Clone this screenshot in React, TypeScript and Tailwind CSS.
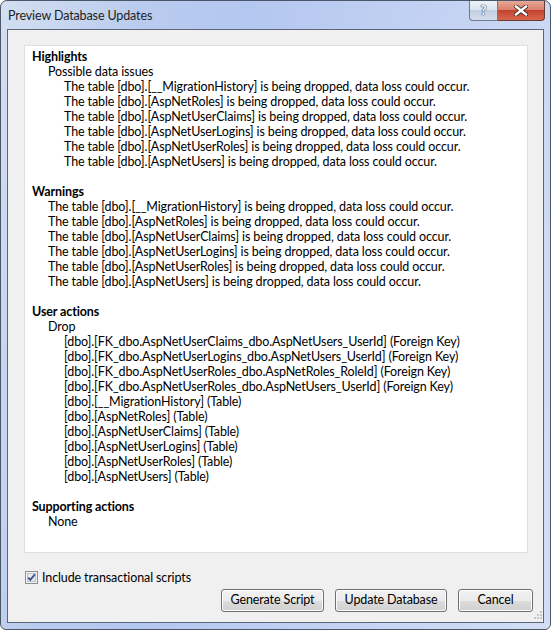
import React from 'react';

type Line = { text: string; level: number; bold?: boolean };

const tables = ['__MigrationHistory', 'AspNetRoles', 'AspNetUserClaims', 'AspNetUserLogins', 'AspNetUserRoles', 'AspNetUsers'];
const dropped = (t: string) => `The table [dbo].[${t}] is being dropped, data loss could occur.`;

const lines: Line[] = [
  { text: 'Highlights', level: 0, bold: true },
  { text: 'Possible data issues', level: 1 },
  ...tables.map((t) => ({ text: dropped(t), level: 2 })),
  { text: '', level: 0 },
  { text: 'Warnings', level: 0, bold: true },
  ...tables.map((t) => ({ text: dropped(t), level: 1 })),
  { text: '', level: 0 },
  { text: 'User actions', level: 0, bold: true },
  { text: 'Drop', level: 1 },
  { text: '[dbo].[FK_dbo.AspNetUserClaims_dbo.AspNetUsers_UserId] (Foreign Key)', level: 2 },
  { text: '[dbo].[FK_dbo.AspNetUserLogins_dbo.AspNetUsers_UserId] (Foreign Key)', level: 2 },
  { text: '[dbo].[FK_dbo.AspNetUserRoles_dbo.AspNetRoles_RoleId] (Foreign Key)', level: 2 },
  { text: '[dbo].[FK_dbo.AspNetUserRoles_dbo.AspNetUsers_UserId] (Foreign Key)', level: 2 },
  ...tables.map((t) => ({ text: `[dbo].[${t}] (Table)`, level: 2 })),
  { text: '', level: 0 },
  { text: 'Supporting actions', level: 0, bold: true },
  { text: 'None', level: 1 },
];

const indent = ['pl-0', 'pl-[16px]', 'pl-[32px]'];

function WinButton({ label, w }: { label: string; w: string }) {
  return (
    <button
      className={`${w} h-[23px] rounded-[3px] border border-[#707070] bg-[linear-gradient(#f2f2f2_0%,#ebebeb_50%,#dddddd_50%,#cfcfcf_100%)] shadow-[inset_0_0_0_1px_#fcfcfc] text-[12.5px] tracking-[-0.12px] text-black`}
    >
      {label}
    </button>
  );
}

export default function App() {
  return (
    <div className="w-[551px] h-[630px] bg-white">
      <div
        className="w-[551px] h-[630px] flex flex-col rounded-t-[7px] rounded-b-[6px] border border-[#4b5668] bg-[linear-gradient(100deg,#d3dff1_0%,#b9cbee_22%,#b4c7f0_38%,#c4d3f3_68%,#d3def5_100%)] text-black"
        style={{ fontFamily: 'Lato, "Noto Sans", sans-serif' }}
      >
        {/* title bar */}
        <div className="h-[28px] flex shrink-0">
          <div className="pl-[7px] pt-[7px] text-[12.5px] leading-[16px] tracking-[-0.12px] text-[#1e1e1e]">Preview Database Updates</div>
          <div className="ml-auto mr-[5px] flex h-[20px] self-start">
            <div className="w-[29px] h-[20px] flex items-center justify-center border border-t-0 border-[#6b7a90] rounded-bl-[4px] bg-[linear-gradient(#eef2f8_0%,#dde5f1_45%,#c2cfe3_50%,#d3ddeb_100%)]">
              <span className="text-[13px] font-bold leading-none text-white [text-shadow:0_0_1px_#34465f,0_0_1px_#34465f,0_0_1px_#34465f]">?</span>
            </div>
            <div className="w-[47px] h-[20px] flex items-center justify-center border border-t-0 border-l-0 border-[#6b3a34] rounded-br-[4px] bg-[linear-gradient(#e8a897_0%,#d9806e_45%,#c4432e_50%,#d7664f_100%)]">
              <svg width="14" height="11" viewBox="0 0 14 11">
                <path d="M2 1.5 L12 9.5 M12 1.5 L2 9.5" stroke="#4a2522" strokeWidth="4.2" strokeLinecap="square" />
                <path d="M2 1.5 L12 9.5 M12 1.5 L2 9.5" stroke="#ffffff" strokeWidth="2.4" strokeLinecap="square" />
              </svg>
            </div>
          </div>
        </div>

        {/* client area */}
        <div className="relative flex-1 mx-[6px] mb-[6px] border border-[#5a677a] bg-[#f0f0f0] flex flex-col pt-[15px] pl-[16px]">
          <div className="w-[504px] h-[508px] border border-[#dcdfe3] bg-white pt-[3px] pl-[7px]">
            {lines.map((l, i) => (
              <div
                key={i}
                className={`${indent[l.level]} h-[15px] text-[12.5px] leading-[15px] tracking-[-0.12px] whitespace-nowrap ${l.bold ? 'font-bold' : ''}`}
              >
                {l.text}
              </div>
            ))}
          </div>

          <div className="mt-[18px] flex items-center h-[13px] pl-[1px]">
            <svg width="13" height="13" viewBox="0 0 13 13">
              <rect x="0.5" y="0.5" width="12" height="12" fill="#f4f4f4" stroke="#8e8f8f" />
              <rect x="2.5" y="2.5" width="8" height="8" fill="#e4e8ef" stroke="#b9c2cf" />
              <path d="M3.2 6.6 L5.3 8.9 L9.9 3.4" fill="none" stroke="#3c4f8c" strokeWidth="1.8" />
            </svg>
            <span className="ml-[4px] text-[12.5px] leading-[15px] tracking-[-0.12px]">Include transactional scripts</span>
          </div>

          <div className="mt-[5px] flex justify-end gap-[11px] pr-[10px]">
            <WinButton label="Generate Script" w="w-[103px]" />
            <WinButton label="Update Database" w="w-[112px]" />
            <WinButton label="Cancel" w="w-[75px]" />
          </div>

          <svg className="absolute right-[1px] bottom-[2px]" width="10" height="10" viewBox="0 0 10 10">
            {[
              [8, 0], [8, 3], [5, 3], [8, 6], [5, 6], [2, 6],
            ].map(([x, y], i) => (
              <rect key={i} x={x} y={y + 1} width="2" height="2" fill="#c4c8cf" />
            ))}
          </svg>
        </div>
      </div>
    </div>
  );
}
